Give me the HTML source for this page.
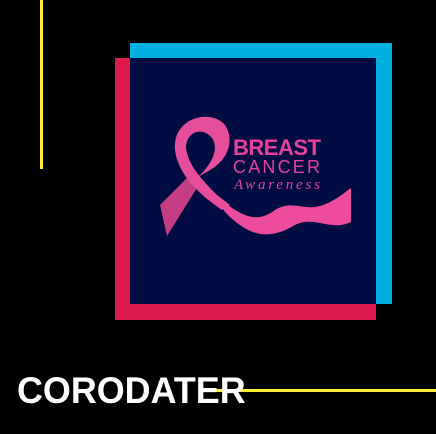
<!DOCTYPE html>
<html><head><style>
html,body{margin:0;padding:0;background:#000;width:436px;height:434px;overflow:hidden;position:relative;font-family:"Liberation Sans",sans-serif}
.a{position:absolute}
</style></head><body>
<div class="a" style="left:40px;top:0;width:3px;height:169px;background:#ffee33"></div>
<div class="a" style="left:130px;top:43px;width:262px;height:261px;background:#00b0e0"></div>
<div class="a" style="left:115px;top:58px;width:261px;height:262px;background:#dd1a4d"></div>
<div class="a" style="left:130px;top:58px;width:246px;height:246px;background:#010d42"></div>
<svg class="a" style="left:130px;top:58px" width="246" height="246" viewBox="130 58 246 246">
<path d="M160 205 L167 236 L200 183 L190 175 Z" fill="#c53d85"/>
<path d="M175 150 C172 118 210 108 225 125 C235 140 228 160 210 170 L198 177 C210 166 220 150 212 138 C202 126 186 132 186 148 C188 165 202 180 217 195 L230 205 L222 210 C200 195 178 175 175 150 Z" fill="#e64e9c"/>
<path d="M215 195 C240 215 255 225 275 210 C295 198 305 215 330 202 C340 197 345 192 351 188 L351 222 C330 232 315 215 295 225 C270 240 250 238 225 212 Z" fill="#ec4b9e"/>
<text x="233" y="155" font-size="22" font-weight="bold" fill="#e8409a" font-family="Liberation Sans" textLength="88">BREAST</text>
<text x="233" y="173" font-size="18" fill="#e8409a" font-family="Liberation Sans" textLength="87">CANCER</text>
<text x="234" y="189" font-size="15" font-style="italic" fill="#e8409a" font-family="Liberation Serif" textLength="86">Awareness</text>
</svg>
<div class="a" style="left:216px;top:389px;width:220px;height:3px;background:#ffee33"></div>
<div class="a" style="left:17px;top:368px;font-size:37px;font-weight:bold;color:#fff;line-height:46px;transform:scaleX(0.97);transform-origin:0 0">CORODATER</div>
</body></html>
